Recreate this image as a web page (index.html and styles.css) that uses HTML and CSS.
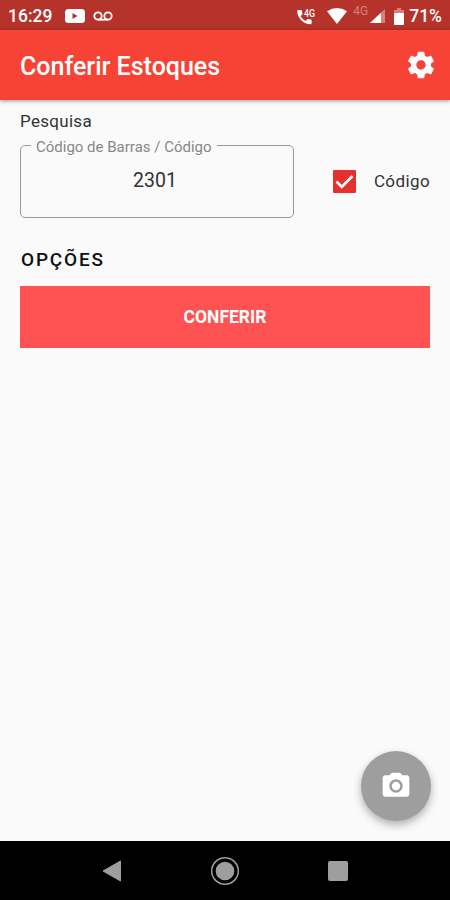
FILE: index.html
```html
<!DOCTYPE html>
<html lang="pt-BR">
<head>
    <meta charset="UTF-8">
    <title>Conferir Estoques</title>
    <link rel="stylesheet" href="styles.css">
</head>
<body>
    <div class="status-bar">
        <span class="clock">16:29</span>
        <svg class="youtube" width="20" height="14" viewBox="0 0 20 14">
            <rect width="20" height="14" rx="3.5" fill="#fff"/>
            <path d="M7.5 4v6l5-3z" fill="#b5332a"/>
        </svg>
        <svg class="voicemail" width="20" height="10" viewBox="0 0 20 10" fill="none" stroke="#fff" stroke-width="1.8">
            <circle cx="5" cy="5" r="3.7"/>
            <circle cx="15" cy="5" r="3.7"/>
            <path d="M5 8.7h10"/>
        </svg>
        <svg class="call" width="19" height="17" viewBox="0 0 19 17">
            <path d="M1 2h3.2c.5 0 .8.3.8.8 0 1 .2 2 .5 2.8.1.3 0 .6-.2.9L3.6 8c1.1 2.2 2.7 3.8 4.9 4.9l1.6-1.7c.2-.2.5-.3.9-.2.9.3 1.8.5 2.8.5.5 0 .8.3.8.8v3.2c0 .5-.3.8-.8.8C6.5 16.3.2 10 .2 2.8c0-.5.3-.8.8-.8z" fill="#fff"/>
            <text x="7" y="8.5" font-size="10" font-weight="500" fill="#fff" textLength="11" lengthAdjust="spacingAndGlyphs">4G</text>
        </svg>
        <svg class="wifi" width="20" height="16" viewBox="0 0 20 16">
            <path d="M0 3.3Q10-3.3 20 3.3L10 16z" fill="#fff"/>
        </svg>
        <span class="network">4G</span>
        <svg class="signal" width="15" height="14" viewBox="0 0 15 14">
            <path d="M0 14L15 0v14z" fill="#d7817b"/>
            <path d="M0 14L11 3.7V14z" fill="#fff"/>
        </svg>
        <svg class="battery" width="10" height="17" viewBox="0 0 10 17">
            <path d="M3 0h4v2h3v3H0V2h3z" fill="#d7817b"/>
            <path d="M0 5h10v11a1 1 0 0 1-1 1H1a1 1 0 0 1-1-1z" fill="#fff"/>
        </svg>
        <span class="percent">71%</span>
    </div>

    <header class="app-bar">
        <h1>Conferir Estoques</h1>
        <svg width="32" height="32" viewBox="0 0 24 24" fill="#fff">
            <path d="M19.43 12.98c.04-.32.07-.64.07-.98s-.03-.66-.07-.98l2.11-1.65c.19-.15.24-.42.12-.64l-2-3.46c-.12-.22-.39-.3-.61-.22l-2.49 1c-.52-.4-1.08-.73-1.69-.98l-.38-2.65C14.46 2.18 14.25 2 14 2h-4c-.25 0-.46.18-.49.42l-.38 2.65c-.61.25-1.17.59-1.69.98l-2.49-1c-.23-.09-.49 0-.61.22l-2 3.46c-.13.22-.07.49.12.64l2.11 1.65c-.04.32-.07.65-.07.98s.03.66.07.98l-2.11 1.65c-.19.15-.24.42-.12.64l2 3.46c.12.22.39.3.61.22l2.49-1c.52.4 1.08.73 1.69.98l.38 2.65c.03.24.24.42.49.42h4c.25 0 .46-.18.49-.42l.38-2.65c.61-.25 1.17-.59 1.69-.98l2.49 1c.23.09.49 0 .61-.22l2-3.46c.12-.22.07-.49-.12-.64l-2.11-1.65zM12 15.5c-1.93 0-3.5-1.57-3.5-3.5s1.57-3.5 3.5-3.5 3.5 1.57 3.5 3.5-1.57 3.5-3.5 3.5z"/>
        </svg>
    </header>

    <main>
        <p class="label">Pesquisa</p>
        <div class="search">
            <fieldset>
                <legend>Código de Barras / Código</legend>
                <div class="value">2301</div>
            </fieldset>
            <div class="check">
                <svg width="23" height="23" viewBox="0 0 23 23">
                    <rect width="23" height="23" rx="1" fill="#e53030"/>
                    <path d="M3.5 11.5l5.3 5.3L19.5 6" fill="none" stroke="#fff" stroke-width="2.6"/>
                </svg>
                <span>Código</span>
            </div>
        </div>
        <h2>OPÇÕES</h2>
        <button class="submit">CONFERIR</button>
        <button class="camera">
            <svg width="32" height="32" viewBox="0 0 24 24" fill="#fff">
                <circle cx="12" cy="12" r="3.2"/>
                <path d="M9 2L7.17 4H4c-1.1 0-2 .9-2 2v12c0 1.1.9 2 2 2h16c1.1 0 2-.9 2-2V6c0-1.1-.9-2-2-2h-3.17L15 2H9zm3 15c-2.76 0-5-2.24-5-5s2.24-5 5-5 5 2.24 5 5-2.24 5-5 5z"/>
            </svg>
        </button>
    </main>

    <nav>
        <svg width="20" height="22" viewBox="0 0 20 22">
            <path d="M1 11L18.5 1v20z" fill="#9e9e9e" stroke="#9e9e9e" stroke-linejoin="round"/>
        </svg>
        <svg width="30" height="30" viewBox="0 0 30 30">
            <circle cx="15" cy="15" r="13.3" fill="none" stroke="#9e9e9e" stroke-width="1.5"/>
            <circle cx="15" cy="15" r="9.3" fill="#9e9e9e"/>
        </svg>
        <svg width="20" height="20" viewBox="0 0 20 20">
            <rect width="20" height="20" rx="2" fill="#9e9e9e"/>
        </svg>
    </nav>
</body>
</html>
```
FILE: styles.css
```css
* {
    box-sizing: border-box;
}

body {
    margin: 0;
    height: 900px;
    display: flex;
    flex-direction: column;
    font-family: Roboto, sans-serif;
    background: #fafafa;
    color: #333;
}

svg {
    display: block;
    flex: none;
}

.status-bar {
    display: flex;
    align-items: center;
    height: 30px;
    padding: 2px 8px 0 8px;
    background: #b5332a;
    color: #fff;
    font-size: 17.5px;
    font-weight: 500;
}

.clock {
    width: 57px;
}

.voicemail {
    margin-left: 8px;
}

.call {
    margin-left: auto;
}

.wifi {
    margin-left: 11px;
}

.network {
    margin: -11px 2px 0 6px;
    font-size: 12px;
    font-weight: 400;
    color: #d7817b;
}

.battery {
    margin: 0 5px 0 9px;
}

.app-bar {
    display: flex;
    align-items: center;
    justify-content: space-between;
    height: 70px;
    padding: 0 13px 0 20px;
    background: #f64336;
    color: #fff;
    box-shadow: 0 1px 4px rgba(0, 0, 0, 0.4);
    z-index: 1;
}

h1 {
    margin: 2px 0 0;
    font-size: 25px;
    font-weight: 500;
}

main {
    position: relative;
    flex: 1;
    padding: 10px 20px 0;
}

.label {
    margin: 0;
    font-size: 17px;
    line-height: 22px;
    letter-spacing: 0.3px;
}

.search {
    display: flex;
    justify-content: space-between;
    margin-top: 5px;
}

fieldset {
    width: 274px;
    height: 81px;
    margin: 0;
    padding: 0 10px;
    border: 1px solid #999;
    border-radius: 5px;
}

legend {
    height: 17px;
    padding: 0 5px;
    font-size: 15px;
    line-height: 21px;
    color: #888;
}

.value {
    margin-top: 15px;
    padding-right: 4px;
    text-align: center;
    font-size: 19.5px;
    line-height: 24px;
    letter-spacing: 0.1px;
}

.check {
    display: flex;
    align-items: center;
    gap: 18px;
    padding-top: 7px;
    font-size: 17px;
    letter-spacing: 0.4px;
}

.check span {
    margin-top: -1px;
}

h2 {
    margin: 30px 0 0 1px;
    font-size: 19px;
    line-height: 24px;
    font-weight: 500;
    letter-spacing: 1.8px;
    color: #111;
}

button {
    border: none;
    color: #fff;
    font-family: inherit;
}

.submit {
    display: block;
    width: 410px;
    height: 62px;
    margin-top: 14px;
    background: #ff5252;
    font-size: 17.5px;
    font-weight: 700;
}

.camera {
    position: absolute;
    right: 19.5px;
    bottom: 20px;
    display: flex;
    align-items: center;
    justify-content: center;
    width: 70px;
    height: 70px;
    padding: 0 0 1px;
    border-radius: 50%;
    background: #9e9e9e;
    box-shadow: 0 4px 8px rgba(0, 0, 0, 0.3);
}

nav {
    display: flex;
    align-items: center;
    justify-content: space-between;
    height: 59px;
    padding: 0 102px;
    background: #000;
}
```
